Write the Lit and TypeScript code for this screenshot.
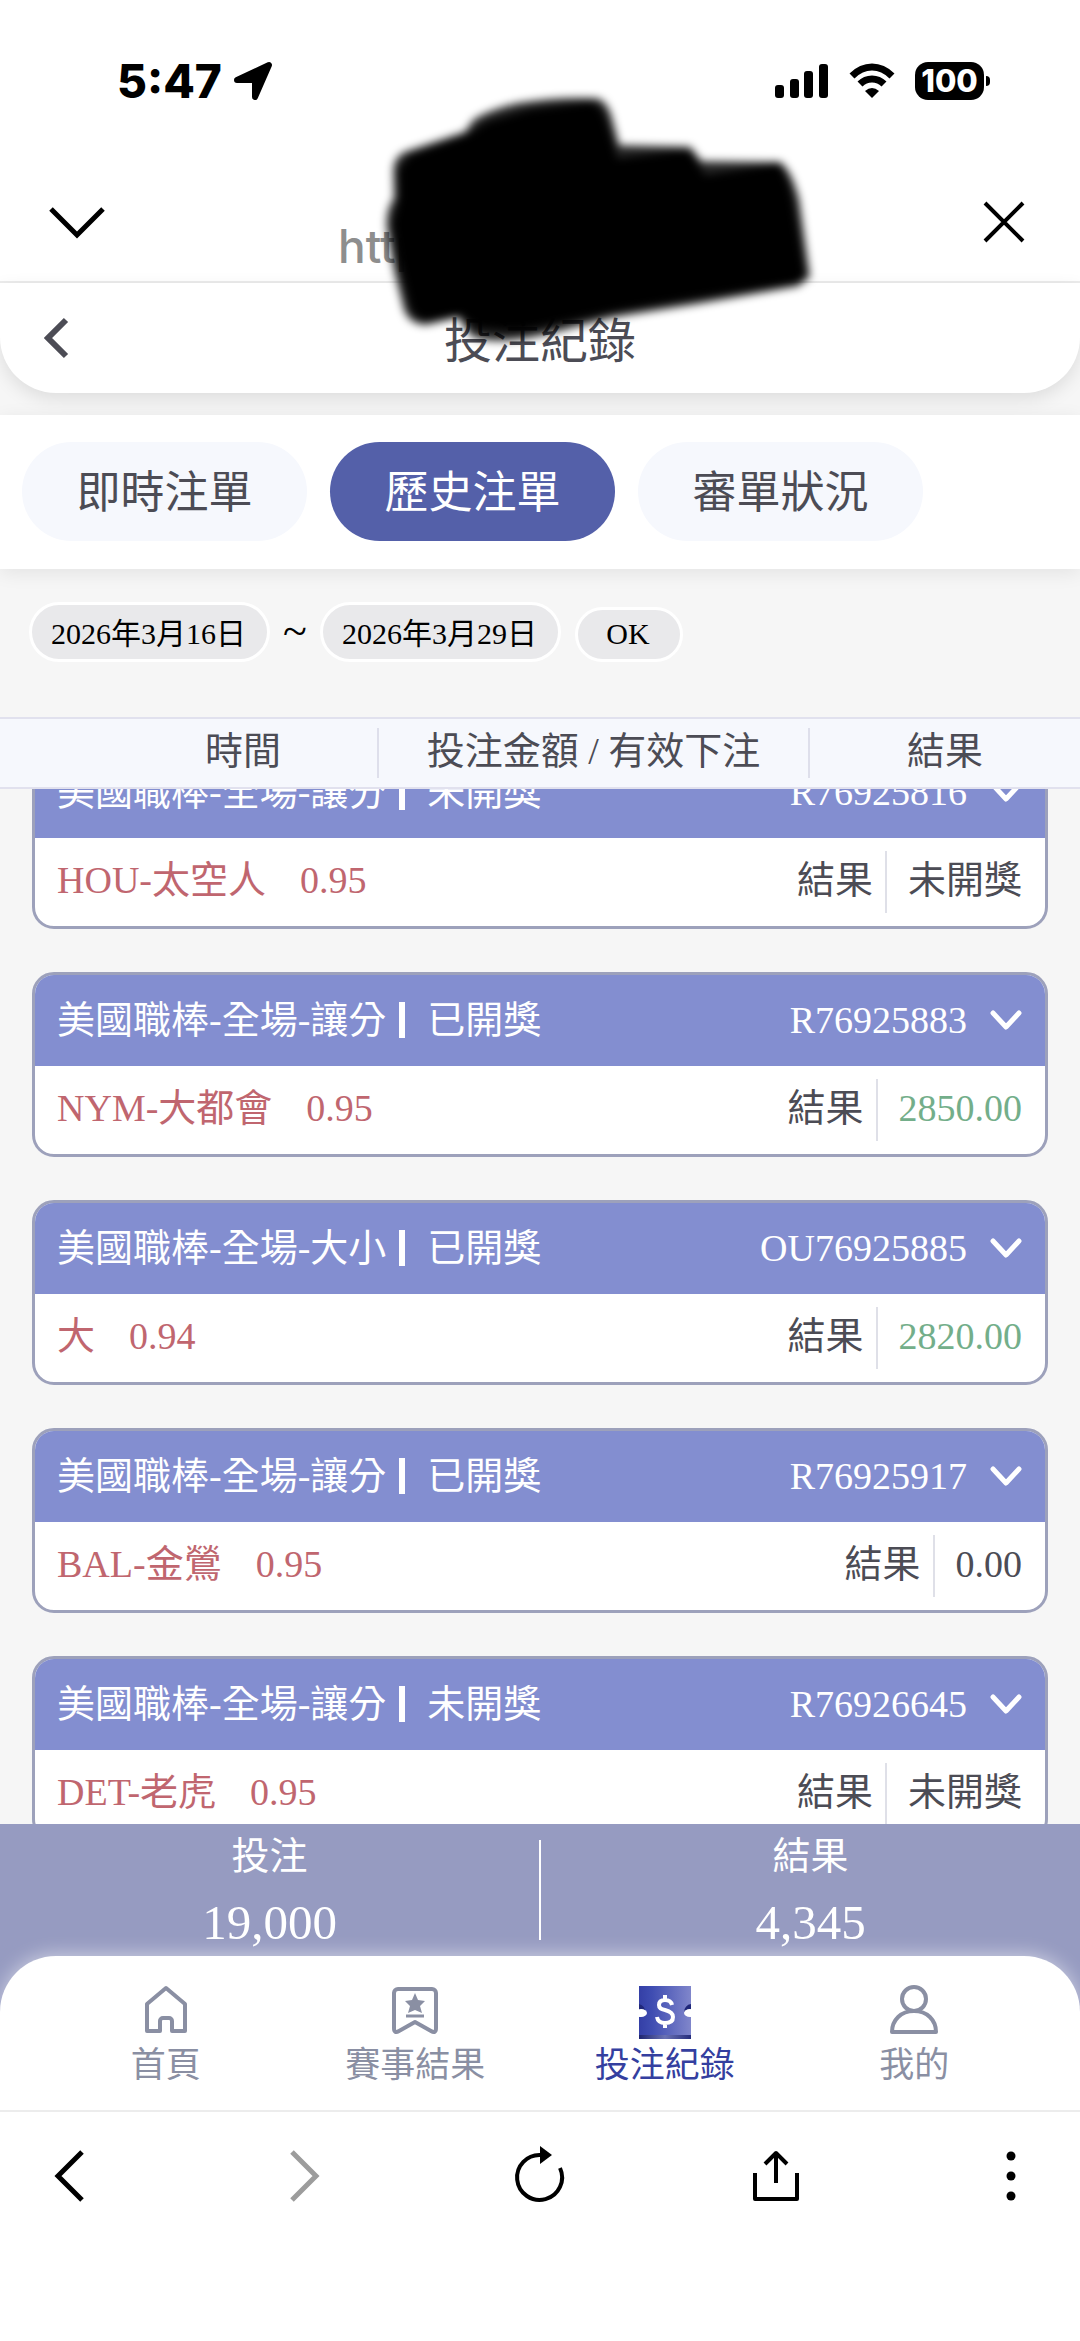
import { LitElement, html, css, svg, nothing } from "lit";
import { customElement, property, state, query, queryAll } from "lit/decorators.js";
import { classMap } from "lit/directives/class-map.js";

interface Bet {
  market: string;
  status: string;
  id: string;
  pick: string;
  odds: string;
  result: string;
  win?: boolean;
}

const BETS: Bet[] = [
  { market: "美國職棒-全場-讓分", status: "未開獎", id: "R76925816", pick: "HOU-太空人", odds: "0.95", result: "未開獎" },
  { market: "美國職棒-全場-讓分", status: "已開獎", id: "R76925883", pick: "NYM-大都會", odds: "0.95", result: "2850.00", win: true },
  { market: "美國職棒-全場-大小", status: "已開獎", id: "OU76925885", pick: "大", odds: "0.94", result: "2820.00", win: true },
  { market: "美國職棒-全場-讓分", status: "已開獎", id: "R76925917", pick: "BAL-金鶯", odds: "0.95", result: "0.00" },
  { market: "美國職棒-全場-讓分", status: "未開獎", id: "R76926645", pick: "DET-老虎", odds: "0.95", result: "未開獎" },
];

const TABS = ["即時注單", "歷史注單", "審單狀況"];

const ICONS = {
  home: svg`<path d="M27 3 46 19V46H33V36a3 3 0 0 0-3-3h-6a3 3 0 0 0-3 3V46H8V19Z" fill="none" stroke="currentColor" stroke-width="4" stroke-linejoin="round"/>`,
  results: svg`<path d="M10 4H44a4 4 0 0 1 4 4V43q0 6-5 3L27 37 11 46q-5 3-5-3V8a4 4 0 0 1 4-4Z" fill="none" stroke="currentColor" stroke-width="4" stroke-linejoin="round"/><path d="M27 8 30 15 37 16 32 21 34 28 27 25 20 28 22 21 17 16 24 15Z" fill="currentColor"/><path d="M18 31H36" stroke="currentColor" stroke-width="3"/>`,
  bets: svg`<defs><linearGradient id="ticket" x1="0" y1="0" x2="1" y2="0"><stop offset="0" stop-color="#343fa6"/><stop offset=".25" stop-color="#3f4db2"/><stop offset="1" stop-color="#8086cb"/></linearGradient><linearGradient id="edge" x1="0" y1="0" x2="1" y2="0"><stop offset="0" stop-color="#1d2470"/><stop offset=".5" stop-color="#6a72b4"/><stop offset="1" stop-color="#262d7c"/></linearGradient></defs><path d="M1 1H53V54H1Z" fill="url(#ticket)"/><path d="M1 50H53V54H1Z" fill="url(#edge)"/><path d="M1 19a9 8 0 0 1 6 8H1ZM53 19a8 8 0 0 0-7 8H53Z" fill="#20287a"/><ellipse cx="3" cy="28" rx="6" ry="4" fill="#fff"/><ellipse cx="52" cy="28" rx="6" ry="4" fill="#fff"/><path d="M34 20q-1-5-7-5-6 0-6 5 0 4 6 5 8 2 8 7 0 6-8 6-7 0-8-6M27 10v5M27 38v5" fill="none" stroke="#fff" stroke-width="4"/>`,
  mine: svg`<circle cx="27" cy="14" r="12" fill="none" stroke="currentColor" stroke-width="4"/><path d="M5 47C5 35 14 26 27 26S49 35 49 47Z" fill="none" stroke="currentColor" stroke-width="4" stroke-linejoin="round"/>`,
};

const NAV: { label: string; icon: keyof typeof ICONS }[] = [
  { label: "首頁", icon: "home" },
  { label: "賽事結果", icon: "results" },
  { label: "投注紀錄", icon: "bets" },
  { label: "我的", icon: "mine" },
];

@customElement("status-bar")
export class StatusBar extends LitElement {
  static styles = css`
    :host {
      display: flex;
      align-items: center;
      justify-content: space-between;
      height: 162px;
      padding: 0 90px 0 117px;
      box-sizing: border-box;
      background: #fff;
      color: #000;
      font-family: Inter, "Liberation Sans", sans-serif;
      font-weight: 800;
    }
    .group { display: flex; align-items: center; }
    .time { font-size: 46px; line-height: 56px; }
    .arrow { width: 40px; height: 40px; margin-left: 11px; }
    .signal { width: 54px; height: 36px; }
    .wifi { width: 46px; height: 36px; margin-left: 20px; }
    .battery {
      display: flex;
      align-items: center;
      justify-content: center;
      width: 69px;
      height: 38px;
      margin-left: 20px;
      border-radius: 13px;
      background: #000;
      color: #fff;
      font-size: 31px;
      line-height: 38px;
    }
    .nub { width: 4px; height: 10px; margin-left: 2px; border-radius: 0 5px 5px 0; background: #000; }
  `;
  render() {
    return html`
      <div class="group">
        <span class="time">5:47</span>
        <svg class="arrow" viewBox="0 0 40 40" aria-hidden="true">
          <path d="M36 4 22 36V19H4Z" stroke="#000" stroke-width="6" stroke-linejoin="round"/>
        </svg>
      </div>
      <div class="group">
        <svg class="signal" viewBox="0 0 54 36" aria-hidden="true">
          <rect x="0" y="22" width="9" height="13" rx="3"/><rect x="15" y="16" width="9" height="19" rx="3"/>
          <rect x="29" y="8" width="9" height="27" rx="3"/><rect x="44" y="1" width="9" height="34" rx="3"/>
        </svg>
        <svg class="wifi" viewBox="0 0 46 36" aria-hidden="true">
          <path d="M3 13Q12 4 23 4T43 13M11 21Q16 16 23 16T35 21" fill="none" stroke="#000" stroke-width="7"/>
          <path d="M16 28Q23 22 30 28L23 35Z"/>
        </svg>
        <span class="battery">100</span><span class="nub"></span>
      </div>`;
  }
}

@customElement("bet-card")
export class BetCard extends LitElement {
  @property({ attribute: false }) bet!: Bet;
  static styles = css`
    :host {
      display: block;
      flex: none;
      box-sizing: border-box;
      border: 3px solid #9da1bb;
      border-radius: 22px;
      overflow: hidden;
      background: #fff;
      font-size: 38px;
      line-height: 48px;
      color: #4c4c55;
    }
    .head {
      display: flex;
      align-items: center;
      width: 100%;
      height: 91px;
      padding: 0 22px 2px;
      border: 0;
      background: #838ed0;
      color: #fff;
      font: inherit;
      text-align: left;
    }
    .bar { width: 6px; height: 36px; margin: 0 22px 0 13px; background: #fff; }
    .id { margin-left: auto; }
    .chevron { width: 34px; height: 24px; margin-left: 22px; }
    .body {
      display: flex;
      align-items: center;
      height: 88px;
      padding: 0 23px 0 22px;
    }
    .body > span { padding-bottom: 4px; }
    .pick { color: #c0666f; }
    .odds { margin-left: 34px; color: #c0666f; }
    .label { margin-left: auto; }
    .body > .value {
      margin-left: 12px;
      padding: 5px 0 9px 21px;
      border-left: 2px solid #dfe0e8;
    }
    .win { color: #73ae8a; }
  `;
  render() {
    const b = this.bet;
    if (!b) return nothing;
    return html`
      <button class="head" type="button">
        <span>${b.market}</span><span class="bar"></span><span>${b.status}</span>
        <span class="id">${b.id}</span>
        <svg class="chevron" viewBox="0 0 34 24" aria-hidden="true">
          <path d="M4 5 17 19 30 5" fill="none" stroke="#fff" stroke-width="5" stroke-linecap="round" stroke-linejoin="round"/>
        </svg>
      </button>
      <div class="body">
        <span class="pick">${b.pick}</span>
        <span class="odds">${b.odds}</span>
        <span class="label">結果</span>
        <span class="value"><span class=${classMap({ win: !!b.win })}>${b.result}</span></span>
      </div>`;
  }
}

@customElement("app-root")
export class AppRoot extends LitElement {
  @state() private tab = 1;
  @query(".list") private list!: HTMLElement;
  @queryAll("bet-card") private cards!: NodeListOf<BetCard>;

  static styles = css`
    :host {
      position: relative;
      display: flex;
      flex-direction: column;
      height: 100vh;
      overflow: hidden;
      background: #f6f6f6;
      color: #4c4c55;
      font-family: "Liberation Serif", "Noto Sans CJK TC", serif;
    }
    button { padding: 0; border: 0; background: none; color: inherit; font: inherit; }
    a { color: inherit; text-decoration: none; }
    svg { display: block; flex: none; }
    .browser {
      display: flex;
      align-items: center;
      justify-content: space-between;
      height: 119px;
      padding: 0 36px;
      border-bottom: 2px solid #ececec;
      background: #fff;
      color: #000;
    }
    .icon-btn { display: flex; justify-content: center; width: 80px; }
    .url {
      align-self: flex-end;
      width: 404px;
      padding-bottom: 7px;
      font: 500 46px/56px Inter, "Liberation Sans", sans-serif;
      color: #8e8e8e;
    }
    .title-bar {
      display: grid;
      grid-template-columns: 80px 1fr 80px;
      align-items: center;
      height: 110px;
      padding: 0 17px;
      border-radius: 0 0 56px 56px;
      background: #fff;
      box-shadow: 0 6px 18px rgba(0, 0, 0, 0.1);
    }
    .title {
      margin: 0;
      padding-bottom: 2px;
      text-align: center;
      font: 400 48px/64px "Noto Sans CJK TC", sans-serif;
    }
    .tabs {
      display: flex;
      gap: 23px;
      margin-top: 22px;
      padding: 27px 22px 28px;
      background: #fff;
      box-shadow: 0 4px 18px rgba(0, 0, 0, 0.08);
    }
    .tab {
      width: 285px;
      height: 99px;
      padding-bottom: 6px;
      border-radius: 50px;
      background: #f6f8fd;
      font-size: 44px;
    }
    .tab.active { background: #5460a9; color: #fff; }
    .filter {
      display: flex;
      align-items: flex-end;
      padding: 33px 29px 55px;
      color: #000;
    }
    .date, .ok {
      box-sizing: border-box;
      border: 3px solid #fff;
      border-radius: 30px;
      background: #e9e9eb;
      color: #000;
      font: 30px/36px "Liberation Serif", "Noto Sans CJK TC", serif;
      text-align: center;
    }
    .date { width: 241px; height: 60px; padding: 0 2px 2px 0; }
    .ok { width: 108px; height: 55px; margin-left: 14px; padding: 0 2px 2px 0; }
    .tilde { width: 50px; text-align: center; font-size: 44px; line-height: 60px; }
    .columns {
      display: grid;
      grid-template-columns: 268fr 431fr 272fr;
      align-items: center;
      height: 68px;
      padding-left: 109px;
      border: solid #e1e1ee;
      border-width: 2px 0;
      background: #f6f8fd;
      font-size: 38px;
      line-height: 46px;
      text-align: center;
    }
    .columns span { padding-bottom: 4px; }
    .columns span + span { border-left: 2px solid #dedfeb; }
    .list {
      display: flex;
      flex: 1;
      flex-direction: column;
      gap: 43px;
      min-height: 0;
      padding: 0 32px 43px;
      overflow-y: auto;
      scrollbar-width: none;
    }
    .footer { background: #969bc1; }
    .summary {
      display: grid;
      grid-template-columns: 1fr 2px 1fr;
      align-items: center;
      height: 132px;
      color: #fff;
      text-align: center;
    }
    .rule { height: 100px; background: #fff; }
    .sum { display: flex; flex-direction: column; gap: 10px; padding-top: 8px; }
    .sum-label { font-size: 38px; line-height: 48px; }
    .sum-value { font-size: 49px; line-height: 66px; }
    .nav {
      display: grid;
      grid-template-columns: repeat(4, 1fr);
      padding: 29px 41px 22px;
      border-radius: 56px 56px 0 0;
      background: #fff;
      box-shadow: 0 -2px 18px rgba(255, 255, 255, 0.5);
      color: #8a8fa3;
      font-size: 35px;
      line-height: 44px;
    }
    .nav-item { display: flex; flex-direction: column; align-items: center; gap: 5px; }
    .nav-item.current { color: #343f9f; }
    .nav-icon { width: 54px; height: 54px; }
    .toolbar {
      display: flex;
      align-items: flex-start;
      justify-content: space-between;
      height: 195px;
      padding: 34px 29px 0;
      border-top: 2px solid #ececec;
      background: #fff;
      color: #000;
    }
    .dim { color: #9c9c9c; }
    .scribble {
      position: absolute;
      top: 80px;
      left: calc(50% - 210px);
      width: 500px;
      height: 300px;
      overflow: visible;
      pointer-events: none;
    }
  `;

  async firstUpdated() {
    await Promise.all([...this.cards].map((card) => card.updateComplete));
    this.list.scrollTop = 45;
  }

  private renderToolIcon(shape: unknown) {
    return html`<svg width="60" height="60" viewBox="0 0 60 60" fill="none" stroke="currentColor" stroke-width="4" aria-hidden="true">${shape}</svg>`;
  }

  render() {
    return html`
      <status-bar></status-bar>
      <div class="browser">
        <button class="icon-btn" type="button" aria-label="收合">
          <svg width="60" height="40" viewBox="0 0 60 40" aria-hidden="true"><path d="M5 7 31 33 57 7" fill="none" stroke="#000" stroke-width="5"/></svg>
        </button>
        <div class="url">http</div>
        <button class="icon-btn" type="button" aria-label="關閉">
          <svg width="44" height="44" viewBox="0 0 44 44" aria-hidden="true"><path d="M3 3 41 41M41 3 3 41" stroke="#000" stroke-width="4"/></svg>
        </button>
      </div>
      <header class="title-bar">
        <button class="icon-btn" type="button" aria-label="返回">
          <svg width="26" height="42" viewBox="0 0 26 42" aria-hidden="true"><path d="M22 3 4 21 22 39" fill="none" stroke="currentColor" stroke-width="6"/></svg>
        </button>
        <h1 class="title">投注紀錄</h1>
      </header>
      <div class="tabs">
        ${TABS.map(
          (t, i) => html`<button type="button" class=${classMap({ tab: true, active: i === this.tab })} @click=${() => (this.tab = i)}>${t}</button>`
        )}
      </div>
      <form class="filter" @submit=${(e: Event) => e.preventDefault()}>
        <input class="date" aria-label="開始日期" value="2026年3月16日" />
        <span class="tilde">~</span>
        <input class="date" aria-label="結束日期" value="2026年3月29日" />
        <button class="ok" type="submit">OK</button>
      </form>
      <div class="columns"><span>時間</span><span>投注金額 / 有效下注</span><span>結果</span></div>
      <main class="list">${BETS.map((b) => html`<bet-card .bet=${b}></bet-card>`)}</main>
      <footer class="footer">
        <div class="summary">
          <div class="sum"><span class="sum-label">投注</span><span class="sum-value">19,000</span></div>
          <div class="rule"></div>
          <div class="sum"><span class="sum-label">結果</span><span class="sum-value">4,345</span></div>
        </div>
        <nav class="nav">
          ${NAV.map(
            (n) => html`<a href="#" class=${classMap({ "nav-item": true, current: n.icon === "bets" })}>
              <svg class="nav-icon" viewBox="0 0 54 54" aria-hidden="true">${ICONS[n.icon]}</svg>
              <span>${n.label}</span>
            </a>`
          )}
        </nav>
      </footer>
      <div class="toolbar">
        <button class="icon-btn" type="button" aria-label="上一頁">${this.renderToolIcon(svg`<path d="M43 6 19 30 43 54" stroke-width="5"/>`)}</button>
        <button class="icon-btn dim" type="button" aria-label="下一頁">${this.renderToolIcon(svg`<path d="M17 6 41 30 17 54" stroke-width="5"/>`)}</button>
        <button class="icon-btn" type="button" aria-label="重新整理">${this.renderToolIcon(svg`<path d="M50 22A22.500 22.500 0 1 1 31 9"/><path d="M30 0 42 9 30 18Z" fill="currentColor" stroke="none"/>`)}</button>
        <button class="icon-btn" type="button" aria-label="分享">${this.renderToolIcon(svg`<path d="M9 27V53H51V27M30 37V6M19 18 30 7 41 18" stroke-linejoin="round"/>`)}</button>
        <button class="icon-btn" type="button" aria-label="更多">${this.renderToolIcon(svg`<g fill="currentColor" stroke="none"><circle cx="30" cy="10" r="4.5"/><circle cx="30" cy="30" r="4.5"/><circle cx="30" cy="50" r="4.5"/></g>`)}</button>
      </div>
      <svg class="scribble" viewBox="0 0 1500 900" aria-hidden="true">
        <defs>
          <filter id="soft" x="-10%" y="-10%" width="120%" height="120%"><feGaussianBlur stdDeviation="13"/></filter>
        </defs>
        <g filter="url(#soft)">
          <path opacity=".85" d="M190 270Q190 232 225 215L405 155 430 120Q470 92 560 70 680 50 800 55 830 62 845 110L868 196 1080 200 1115 244 1350 246Q1385 270 1408 360L1440 590 1405 618 1100 672 850 712 640 765Q480 800 420 765L385 712 290 734Q240 735 222 690L192 570 170 440Q167 390 192 355Z"/>
          <path d="M205 270 240 225 410 165 470 125 600 88 780 65Q815 75 828 120L862 235 1040 212 1080 215 1125 285 1345 250Q1378 300 1390 370L1426 588 1400 610 1100 655 850 695 640 740 560 755 440 745 390 705 290 722Q250 715 240 680L205 540 187 430 208 350Z"/>
        </g>
      </svg>`;
  }
}
